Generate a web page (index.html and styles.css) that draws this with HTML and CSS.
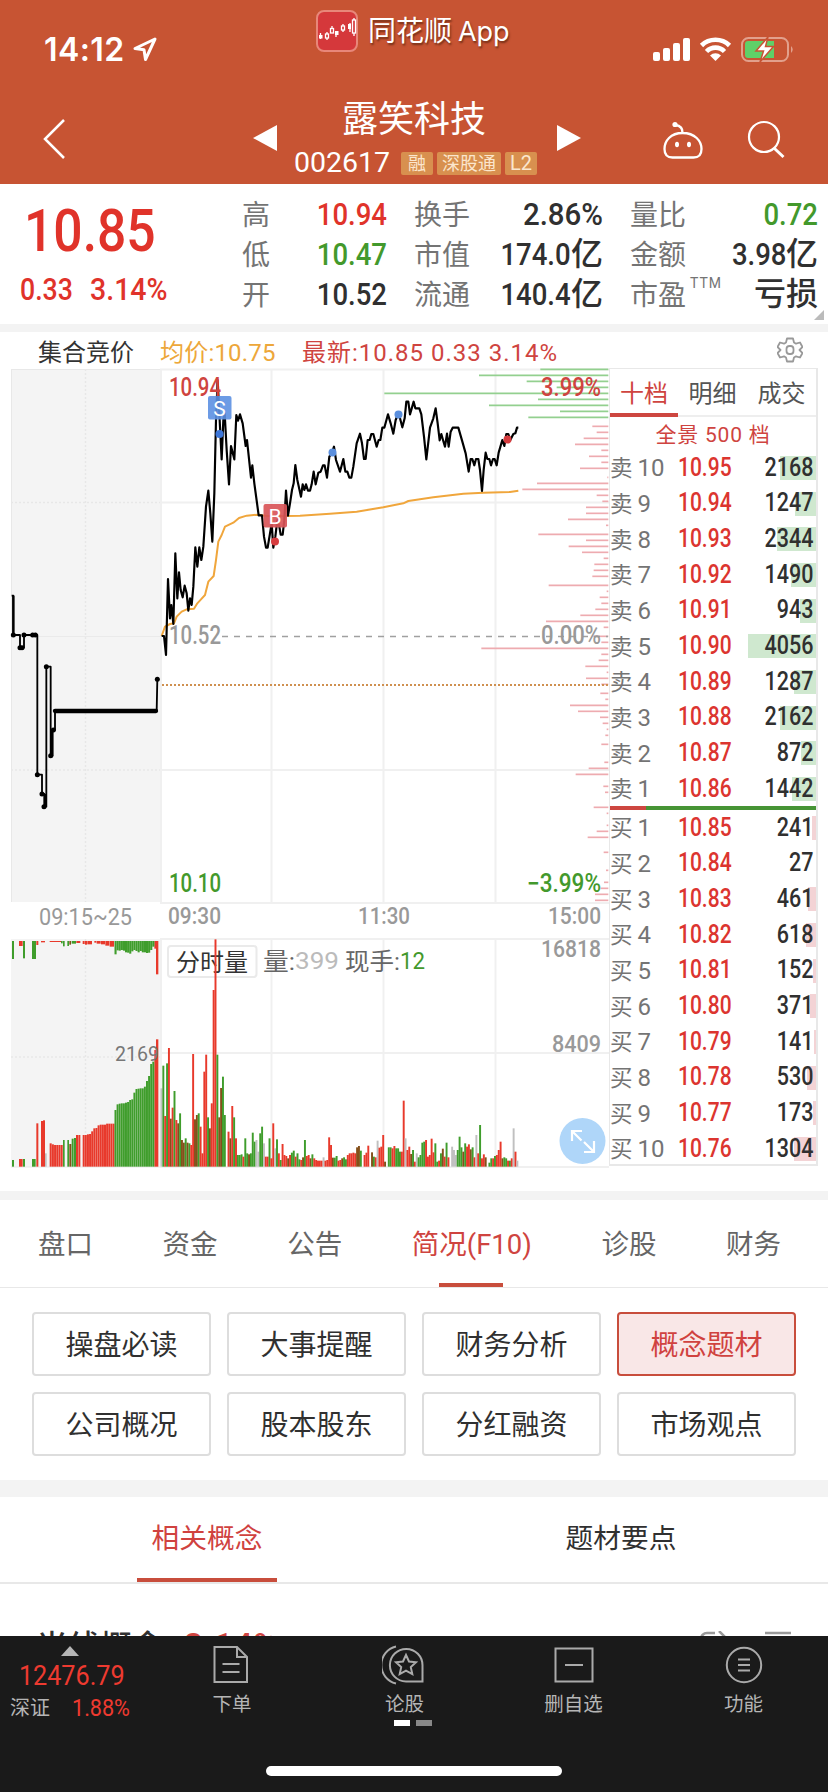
FILE: index.html
```html
<!DOCTYPE html>
<html lang="zh-CN">
<head>
<meta charset="utf-8">
<title>露笑科技 002617</title>
<link rel="stylesheet" href="styles.css">
</head>
<body>
<div class="page">
  <header class="header">
    <div class="status">
      <div class="clock"><span>14:12</span>
        <svg width="24" height="25" viewBox="0 0 24 25"><path d="M22 2L2 11.5l9 1.2L12.500 22.500z" fill="none" stroke="#fff" stroke-width="3" stroke-linejoin="round"/></svg>
      </div>
      <div class="app">
        <svg width="42" height="42" viewBox="0 0 42 42"><rect x="1" y="1" width="40" height="40" rx="7" fill="#d5383b" stroke="#e8877a" stroke-width="2"/><g fill="none" stroke="#fff" stroke-width="1.300"><path d="M4.500 29v-6M11 30v-8M16 18v-2M20 27v-4M27 22v-8M34 22V13M38 26V8"/><rect x="9.500" y="24" width="3" height="4" fill="#d5383b"/><rect x="14.500" y="18.500" width="3" height="4.500"/><rect x="25.500" y="16" width="3" height="4" fill="#d5383b"/><rect x="36.500" y="10" width="3" height="13" fill="#d5383b"/></g><g fill="#fff"><rect x="3" y="25" width="3.500" height="3.500"/><rect x="19" y="21" width="3.500" height="4"/><rect x="32" y="14" width="3" height="5"/></g></svg>
        <span>同花顺 <i>App</i></span>
      </div>
      <svg class="signals" width="142" height="30" viewBox="0 0 142 30">
        <g fill="#fff"><rect x="0" y="18" width="7" height="9" rx="2"/><rect x="10" y="14" width="7" height="13" rx="2"/><rect x="20" y="9" width="7" height="18" rx="2"/><rect x="30" y="4" width="7" height="23" rx="2"/></g>
        <g fill="none" stroke="#fff" stroke-width="4.600"><path d="M48.500 11.500a20 20 0 0 1 28 0"/><path d="M53.500 17.500a12.500 12.500 0 0 1 18 0"/></g><path d="M57 21.500a8 8 0 0 1 11 0l-5.500 5.500z" fill="#fff"/>
        <rect x="89" y="4" width="46" height="23" rx="6.500" fill="none" stroke="#e2a08c" stroke-width="2"/><path d="M95 7h26v17H95a3 3 0 0 1-3-3V10a3 3 0 0 1 3-3z" fill="#5fd068"/><path d="M138 12q3.500 3.500 0 7z" fill="#e2a08c"/>
        <path d="M115 3L103 17h7.500L107 28l13.500-15.500h-8z" fill="#fff" stroke="#c75433" stroke-width="1.500"/>
      </svg>
    </div>
    <div class="titlebar">
      <svg class="back" width="24" height="40" viewBox="0 0 24 40"><path d="M21 1L2 20l19 19" fill="none" stroke="#fff" stroke-width="2.500"/></svg>
      <svg class="prev" width="24" height="26" viewBox="0 0 24 26"><path d="M24 0v26L0 13z" fill="#fff"/></svg>
      <div class="title">
        <h1>露笑科技</h1>
        <div class="code"><span>002617</span><b>融</b><b>深股通</b><b>L2</b></div>
      </div>
      <svg class="next" width="24" height="26" viewBox="0 0 24 26"><path d="M0 0v26l24-13z" fill="#fff"/></svg>
      <svg class="robot" width="42" height="38" viewBox="0 0 42 38"><path d="M20.500 12C33 12 39.500 20 39.500 28c0 6-3 8.500-8 8.500h-21c-5 0-8-2.500-8-8.500 0-8 6-16 18-16zM20.500 12q.5-7-7-8" fill="none" stroke="#fff" stroke-width="2.300"/><circle cx="13" cy="3.500" r="2.600" fill="#fff"/><ellipse cx="15" cy="23.500" rx="2" ry="2.800" fill="#fff"/><ellipse cx="27" cy="23.500" rx="2" ry="2.800" fill="#fff"/></svg>
      <svg class="search" width="40" height="40" viewBox="0 0 40 40"><circle cx="17" cy="17" r="15" fill="none" stroke="#fff" stroke-width="2.200"/><path d="M27.500 28.500l9 8.500" stroke="#fff" stroke-width="3"/></svg>
    </div>
  </header>

  <section class="quote">
    <div class="last"><div class="big"><span class="num">10.85</span></div><div class="chg"><span class="num">0.33</span><span class="num">3.14%</span></div></div>
    <dl class="c1"><dt>高</dt><dd class="up num">10.94</dd><dt>低</dt><dd class="down num">10.47</dd><dt>开</dt><dd class="num">10.52</dd></dl>
    <dl class="c2"><dt>换手</dt><dd class="num">2.86%</dd><dt>市值</dt><dd><span class="num">174.0</span>亿</dd><dt>流通</dt><dd><span class="num">140.4</span>亿</dd></dl>
    <dl class="c3"><dt>量比</dt><dd class="down num">0.72</dd><dt>金额</dt><dd><span class="num">3.98</span>亿</dd><dt>市盈<sup>TTM</sup></dt><dd>亏损</dd></dl>
    <i class="corner"></i>
  </section>

  <section class="market">
    <div class="legend">
      <span class="l1">集合竞价</span><span class="l2">均价:10.75</span><span class="l3">最新:10.85&nbsp;0.33&nbsp;3.14%</span>
      <svg width="26" height="26" viewBox="0 0 26 26"><path d="M10 1.500h6l1 4 2 1.200 4-1.200 2.500 4.500-3 3 3 3-2.500 4.500-4-1.200-2 1.200-1 4h-6l-1-4-2-1.200-4 1.200L.5 16l3-3-3-3L3 5.500l4 1.200 2-1.200z" fill="none" stroke="#999" stroke-width="1.800" stroke-linejoin="round"/><rect x="9.500" y="9" width="7" height="8" rx="3" fill="none" stroke="#999" stroke-width="1.800"/></svg>
    </div>
    <div class="board">
      <svg class="chart" id="chart" width="600" height="800" viewBox="10 368 600 800"></svg>
      <div class="book">
        <nav><b class="on">十档</b><b>明细</b><b>成交</b></nav>
        <div class="all">全景 500 档</div>
        <div id="asks"></div>
        <div class="ratio"><i></i></div>
        <div id="bids"></div>
      </div>
    </div>
  </section>

  <nav class="tabs"><a>盘口</a><a>资金</a><a>公告</a><a class="on">简况(F10)</a><a>诊股</a><a>财务</a></nav>
  <section class="buttons">
    <a>操盘必读</a><a>大事提醒</a><a>财务分析</a><a class="on">概念题材</a>
    <a>公司概况</a><a>股本股东</a><a>分红融资</a><a>市场观点</a>
  </section>
  <nav class="subtabs"><a class="on"><span>相关概念</span></a><a><span>题材要点</span></a></nav>
  <section class="concept"><b>光线概念</b><em>3.14%</em>
    <svg width="92" height="24" viewBox="0 0 92 24"><path d="M16 2H8a6 6 0 0 0-6 6v8M20 0l6 6-6 6M66 2h26" fill="none" stroke="#999" stroke-width="2.500"/></svg>
  </section>

  <footer class="dock">
    <div class="items">
      <div class="index"><i></i><span class="num">12476.79</span><p>深证<em class="num">1.88%</em></p></div>
      <div class="item i1"><svg width="36" height="40" viewBox="0 0 36 40"><path d="M1.500 2H24l10 10v25H1.500zM24 2v10h10M9.500 19h17M9.500 27h17"/></svg>下单</div>
      <div class="item i2"><svg width="42" height="40" viewBox="0 0 42 40"><path d="M14 1.500A19 19 0 0 0 14 38.500M40.500 36.500H24a16.300 16.300 0 1 1 16.500-16.200zM24 10l3 6.500 7 .8-5.200 4.800 1.500 7-6.300-3.500-6.300 3.500 1.500-7-5.200-4.800 7-.8z"/></svg>论股<u><s></s><s></s></u></div>
      <div class="item i3"><svg width="40" height="40" viewBox="0 0 40 40"><rect x="1.500" y="3.500" width="37" height="33"/><path d="M11 20h18"/></svg>删自选</div>
      <div class="item i4"><svg width="38" height="40" viewBox="0 0 38 40"><circle cx="19" cy="20" r="17.200"/><path d="M13 14.500h12M13 20h12M13 25.500h12"/></svg>功能</div>
    </div>
    <div class="home"></div>
  </footer>
</div>
<script src="chart.js"></script>
</body>
</html>
```

FILE: styles.css
```css
* { box-sizing: border-box; }
body { margin: 0; background: #fff; color: #303030; font-family: Roboto, "Noto Sans CJK SC", sans-serif; }
i, em, u, s { font-style: normal; text-decoration: none; }
svg { display: block; flex: none; }
.page { width: 828px; height: 1792px; display: flex; flex-direction: column; overflow: hidden; }
.page > * { flex: none; }
.num { display: inline-block; font-weight: 500; transform: scaleX(.86); transform-origin: right; }
.up { color: #e0332a; }
.down { color: #43992c; }

.header { height: 184px; background: #c75433; color: #fff; }
.status { height: 96px; display: flex; }
.clock { width: 316px; padding: 37px 0 0 44px; display: flex; gap: 8px; font: 600 32px/25px Inter, sans-serif; letter-spacing: .4px; }
.clock span { width: 81px; white-space: nowrap; }
.app { width: 337px; padding-top: 10px; display: flex; gap: 10px; font-size: 28px; line-height: 44px; text-shadow: 1px 2px 2px rgba(80,30,10,.7); }
.app i { font-family: Inter, sans-serif; font-size: 27px; margin-left: -1px; }
.signals { margin-top: 34px; }
.titlebar { height: 88px; display: flex; }
.back { margin: 23px 0 0 43px; }
.prev { margin: 29px 0 0 186px; }
.title { width: 280px; }
.next { margin-top: 29px; }
.robot { margin: 25px 0 0 81px; }
.search { margin: 24px 0 0 43px; }
.title h1 { margin: 2px 0 0; font-size: 36px; font-weight: 400; line-height: 44px; text-align: center; padding-right: 6px; }
.code { display: flex; align-items: center; margin-top: 3px; padding-left: 17px; font-size: 28.500px; line-height: 36px; }
.code span { width: 107px; }
.code b { height: 23px; margin-right: 4px; padding: 0 7px; border-radius: 2px; background: #d8904f; color: #fbe6cd; font-size: 18px; font-weight: 400; line-height: 23px; }
.code b:nth-of-type(2) { padding: 0 5px; }
.code b:last-child { font-size: 20px; padding: 0 5px; }

.quote { position: relative; height: 148px; border-bottom: 8px solid #f3f3f3; display: flex; }
.last { width: 242px; color: #e0332a; }
.big { height: 80px; padding: 14px 0 0 24px; font-size: 60px; line-height: 66px; }
.last .num { transform-origin: left; transform: scaleX(.86); }
.chg { display: flex; padding: 9px 0 0 20px; font-size: 31px; line-height: 34px; }
.chg span { width: 70px; }
.chg .num:last-child { transform: scaleX(.92); }
.quote dl { margin: 10px 0 0; display: grid; grid-template-columns: auto 1fr; grid-auto-rows: 40px; line-height: 40px; }
.c1 { width: 145px; }
.c2 { width: 189px; margin-left: 27px !important; }
.c3 { width: 188px; margin-left: 27px !important; }
.quote dt { font-size: 28px; line-height: 43px; color: #747474; white-space: nowrap; }
.quote dd { margin: 0; font-size: 32px; font-weight: 500; text-align: right; white-space: nowrap; }
.quote dd .num { margin-left: -20px; }
.c2 dd:first-of-type { transform: scaleX(.92); }
.c3 dt:nth-of-type(3) { width: 60px; }
.quote sup { font-size: 14px; line-height: 10px; vertical-align: 17px; letter-spacing: 1px; margin-left: 4px; }
.corner { position: absolute; right: 4px; bottom: 4px; border: 5px solid transparent; border-right-color: #bbb; border-bottom-color: #bbb; }

.market { height: 868px; border-bottom: 9px solid #f3f3f3; }
.legend { height: 36px; display: flex; align-items: center; line-height: 36px; font-size: 24px; padding: 5px 0 0 38px; }
.l1 { width: 122px; color: #333; }
.l2 { width: 142px; color: #eda73a; letter-spacing: .2px; }
.l3 { width: 475px; color: #cf4440; letter-spacing: 1px; }
.legend svg { margin-top: -6px; }
.board { display: flex; padding-left: 10px; }
.chart text { font-family: Roboto, "Noto Sans CJK SC", sans-serif; }
.book { width: 209px; height: 798px; margin-left: -1px; border: 1px solid #e8e8e8; border-width: 1px 2px 2px 1px; }
.book nav { height: 48px; display: flex; border-bottom: 2px solid #eee; }
.book nav b { flex: 1; text-align: center; font-size: 24px; font-weight: 400; line-height: 50px; color: #555; }
.book nav .on { flex: 0 0 68px; height: 48px; color: #cf4440; border-bottom: 4px solid #cd4640; }
.all { height: 34px; line-height: 36px; font-size: 21px; text-align: center; color: #cf4440; letter-spacing: .8px; }
.row { position: relative; height: 35.670px; display: flex; align-items: center; line-height: 35px; }
.row label { width: 68px; font-size: 24px; color: #747474; white-space: nowrap; }
.row label i { font-size: 22.500px; margin-right: 5px; }
.row .num { position: relative; margin-top: -3px; font-size: 25px; }
.row .price { width: 60px; color: #dc352f; transform-origin: left; transform: scaleX(.84); }
.row .qty { flex: 1; text-align: right; padding-right: 3px; }
.row .bar { position: absolute; right: 0; top: 5px; height: 24px; background: #cfe8cf; }
#bids .bar { background: #f3d3d5; }
.ratio { height: 4px; margin-bottom: 1px; background: #469435; }
#asks { height: 355px; }
.ratio i { display: block; width: 36px; height: 4px; background: #cd4640; }

.tabs { height: 88px; display: flex; justify-content: space-between; padding: 0 47px 0 38px; border-bottom: 1px solid #e8e8e8; font-size: 27.500px; line-height: 89px; color: #666; }
.tabs .on { position: relative; color: #cf4440; }
.tabs .on::after { content: ""; position: absolute; left: 27px; bottom: 0; width: 64px; height: 4px; background: #c84d3c; }
.buttons { height: 209px; padding: 24px 32px; border-bottom: 17px solid #f3f3f3; display: grid; grid-template-columns: repeat(4, 1fr); grid-auto-rows: 64px; gap: 16px; }
.buttons a { border: 2px solid #ddd; border-radius: 4px; text-align: center; font-size: 28px; line-height: 63px; }
.buttons .on { border-color: #c84d3c; background: #f9e7e7; color: #d0423f; }
.subtabs { height: 87px; display: flex; border-bottom: 2px solid #e8e8e8; }
.subtabs a { flex: 1; display: flex; justify-content: center; font-size: 27.700px; line-height: 83px; }
.subtabs span { width: 140px; text-align: center; height: 85px; }
.subtabs .on span { color: #d0423f; border-bottom: 4px solid #c84d3c; }
.concept { height: 52px; overflow: hidden; display: flex; padding: 37px 35px 0 36px; font-size: 32px; line-height: 46px; }
.concept b { width: 148px; font-weight: 500; margin-top: 3px; }
.concept em { width: 515px; color: #cf4440; font-weight: 500; font-size: 34px; white-space: nowrap; margin-top: 1px; letter-spacing: .5px; }
.concept svg { margin-top: 10px; }

.dock { height: 156px; background: #1a1a1a; color: #b5b5b5; }
.items { height: 130px; display: flex; }
.index { width: 143px; text-align: center; font-size: 28px; line-height: 33px; color: #ee3a30; }
.index > i { display: block; width: 18px; margin: 10px auto 3px 61px; border: 9px solid transparent; border-top: 0; border-bottom: 10px solid #b5b5b5; }
.index .num { transform-origin: center; transform: scaleX(.9); font-weight: 400; }
.index p { margin: 0; display: flex; padding-left: 10px; font-size: 20px; line-height: 32px; color: #b5b5b5; }
.index p .num { margin-left: 22px; color: #ee3a30; font-size: 24px; transform-origin: left; }
.item { position: relative; display: flex; flex-direction: column; align-items: center; width: 180px; padding-top: 9px; font-size: 19.500px; line-height: 40px; }
.item svg { fill: none; stroke: #aaa; stroke-width: 2; }
.i1 svg { margin-left: -3px; }
.i2 svg { margin-left: -3px; }
.i1 { width: 178px; }
.i2 { width: 167px; }
.i3 { width: 171px; }
.i4 { width: 169px; }
.item u { position: absolute; top: 84px; left: 73px; display: flex; gap: 6px; }
.item s { width: 16px; height: 6px; background: #fff; }
.item s + s { background: #888; }
.home { width: 296px; height: 10px; margin: 0 auto; border-radius: 5px; background: #fff; }
```

FILE: chart.js
```js
const R = '#e8392b', G = '#3f9d2c', B = '#84501a', Y = '#c0c0c0';
const colors = { r: R, g: G, b: B, y: Y };
const rect = (x, y, w, h, f) => `<rect x="${x}" y="${y}" width="${w}" height="${h}" fill="${f}"/>`;
const line = (x1, y1, x2, y2, c, extra = '') => `<path d="M${x1} ${y1}L${x2} ${y2}" stroke="${c}" ${extra}/>`;
const text = (x, y, w, size, color, weight, s) =>
  `<text x="${x}" y="${y}" font-size="${size}" fill="${color}" font-weight="${weight}" textLength="${w}" lengthAdjust="spacingAndGlyphs">${s}</text>`;
let out = '';

// backgrounds and grid
out += rect(11, 369, 149.500, 533, '#f4f4f4') + rect(11, 939, 149.500, 228, '#f4f4f4');
const grid = '#f0f0f0', wide = 'stroke-width="2"', dots = 'stroke-width="1.500" stroke-dasharray="2 2"';
for (const y of [369.500, 502.500, 770, 903, 939, 1053, 1167]) out += line(160, y, 609, y, grid, wide);
for (const x of [161, 271.500, 383.500, 495.500]) out += line(x, 369, x, 903, grid, wide) + line(x, 939, x, 1167, grid, wide);
for (const y of [502.500, 770, 1057]) out += line(11, y, 160, y, '#e7e7e7', dots);
out += line(85.500, 369, 85.500, 902, '#e7e7e7', dots) + line(85.500, 939, 85.500, 1167, '#e7e7e7', dots);
out += line(11, 369.500, 160, 369.500, '#e8e8e8') + line(11.500, 369, 11.500, 902, '#e8e8e8') + line(11, 636.500, 160, 636.500, '#eaeaea') + line(11, 1167, 160, 1167, '#e8e8e8');

// price distribution, one line per price: start x, y
const greens = '721,28 537,46 680,64 770,82 253,100 714,118 567,136 780,154 685,172';
const reds = '877,199 890,217 851,235 825,253 904,271 867,289 904,307 840,325 922,352 711,370 667,388 890,406 907,424 858,442 858,460 804,478 918,496 715,523 858,541 806,559 846,577 911,595 883,613 881,631 877,649 746,676 920,694 899,712 904,730 886,748 841,766 738,784 911,802 880,829 904,847 544,865 904,883 896,901 856,919 920,937 858,955 904,973 901,1000 916,1018 810,1036 834,1054 900,1072 908,1090 920,1108 916,1126 904,1153 913,1207 866,1225 827,1243 910,1279 915,1297 881,1342 920,1360 920,1396 890,1414 863,1432 911,1477 918,1531 912,1567 902,1585 885,1603 885,1621';
const dist = (s, c) => s.split(' ').map(p => { const [x, y] = p.split(',').map(Number); return line(x + 900, y, 1825, y, c, 'stroke-width="5"'); }).join('');
out += `<g transform="translate(0 360) scale(.33333)">${dist(greens, '#93d08f')}${dist(reds, '#eeabb0')}</g>`;

out += line(222, 636.500, 608, 636.500, '#a0a0a0', 'stroke-width="1.300" stroke-dasharray="6 6"');
out += line(162, 685, 608, 685, '#cf9050', 'stroke-width="2" stroke-dasharray="2 2"');

// average and price curves
const avg = '485,828 495,800 510,792 522,790 530,770 545,755 560,748 582,746 592,730 603,718 615,705 625,665 641,648 648,600 655,545 665,525 675,500 700,488 717,474 740,467 775,464 800,468 860,468 900,467 990,461 1070,455 1150,442 1210,430 1225,423 1300,412 1390,401 1450,398 1530,396 1555,392';
const price = '485,828 492,828 498,885 504,657 510,775 514,735 520,792 526,580 532,715 537,637 542,690 548,712 554,677 560,700 565,752 570,715 575,735 580,680 586,562 592,620 598,562 604,600 610,560 618,440 625,392 631,460 637,545 643,400 648,180 653,60 660,200 665,298 670,180 674,160 680,270 687,373 693,258 703,298 709,165 714,182 720,163 728,190 737,258 741,240 753,353 757,316 763,370 776,466 786,466 792,530 798,563 803,563 810,520 815,490 820,563 826,530 832,480 838,500 842,524 848,524 853,480 858,392 864,467 870,430 876,390 881,370 886,315 892,360 903,410 908,373 913,390 918,373 924,392 930,392 935,373 941,335 947,373 955,338 962,335 969,316 974,316 981,353 988,290 995,280 1002,260 1008,300 1020,335 1030,297 1036,335 1042,335 1048,353 1054,353 1060,320 1070,250 1080,221 1086,250 1092,297 1097,297 1103,240 1109,240 1114,222 1120,222 1130,260 1136,240 1141,240 1147,203 1153,203 1164,163 1172,190 1180,221 1187,180 1195,160 1200,175 1207,202 1214,175 1219,125 1225,125 1230,163 1241,125 1246,145 1258,145 1264,163 1272,230 1279,298 1290,203 1300,175 1307,145 1313,190 1319,241 1324,222 1329,240 1335,260 1341,221 1346,260 1352,215 1358,203 1375,203 1386,241 1397,280 1406,335 1412,297 1417,297 1423,316 1428,297 1435,297 1440,330 1446,393 1451,330 1457,278 1462,297 1468,297 1473,316 1479,297 1484,297 1490,316 1496,278 1507,240 1513,258 1519,222 1525,222 1531,240 1540,222 1546,220 1551,203 1555,203';
const auction = '35,707 40,707 40,825 60,825 60,863 72,863 72,825 112,825 112,1244 126,1244 126,1302 133,1302 133,1340 139,1340 139,920 152,920 152,1187 158,1187 158,1110 165,1110 165,1053 470,1053 472,958';
const poly = (p, c, w) => `<polyline points="${p}" fill="none" stroke="${c}" stroke-width="${w}" stroke-linejoin="round"/>`;
const nodes = [[40, 825], [60, 863], [66, 863], [72, 825], [98, 825], [106, 825], [112, 1244], [126, 1302], [132, 1340], [139, 920], [152, 1187], [160, 1110], [472, 958]];
out += `<g transform="translate(0 360) scale(.33333)">${poly(avg, '#f0a63c', 6)}${poly(price, '#000', 6.500)}${poly(auction, '#000', 5.500)}`
  + line(40, 707, 40, 825, '#000', 'stroke-width="7"') + line(154, 1110, 154, 1187, '#000', 'stroke-width="8"') + line(136, 1302, 136, 1340, '#000', 'stroke-width="9"')
  + line(165, 1053, 468, 1053, '#000', 'stroke-width="13" stroke-linecap="round"')
  + nodes.map(n => `<circle cx="${n[0]}" cy="${n[1]}" r="7.500"/>`).join('') + '</g>';

// trade markers
const dot = (x, y, c) => `<circle cx="${x}" cy="${y}" r="4" fill="${c}"/>`;
out += dot(219.500, 434, '#3d76d8') + dot(275, 541.500, '#d63c3f') + dot(332.500, 452.500, '#5b8fdd') + dot(398.500, 414.500, '#5b8fdd') + dot(507.500, 439.500, '#d63c3f');
out += text(169, 396, 52, 25, '#cf4440', 500, '10.94') + text(541, 396, 60, 25, '#cf4440', 500, '3.99%');
out += `<g font-size="21" fill="#fff" text-anchor="middle"><rect x="208" y="396" width="23.500" height="23.500" rx="2" fill="#5c90e2" opacity=".9"/><text x="219.500" y="415.500">S</text><rect x="263.500" y="504" width="23.500" height="23.500" rx="2" fill="#d95558" opacity=".92"/><text x="275" y="523.500">B</text></g>`;
out += text(169, 644, 52, 25, '#999', 500, '10.52') + text(541, 644, 60, 25, '#999', 500, '0.00%');
out += text(169, 892, 52, 25, '#43992c', 500, '10.10') + text(527, 892, 74, 25, '#43992c', 500, '−3.99%');
out += text(39, 925, 93, 24, '#999', 400, '09:15~25') + text(168, 924, 53, 24, '#999', 500, '09:30') + text(358, 924, 52, 24, '#999', 500, '11:30') + text(548, 924, 53, 24, '#999', 500, '15:00');
out += text(541, 957, 60, 24, '#999', 500, '16818') + text(552, 1052, 49, 24, '#999', 500, '8409');

// volume panel
out += '<rect x="168" y="946" width="88.500" height="31" rx="3" fill="#fff" stroke="#eaeaea" stroke-width="2"/>';
out += text(176, 971, 72, 24, '#333', 400, '分时量') + text(263, 970, 32, 24, '#666', 400, '量:') + text(295, 969, 44, 24, '#bbb', 400, '399') + text(345, 970, 55, 24, '#666', 400, '现手:') + text(400, 969, 25, 24, '#43992c', 400, '12');

let bars = '';
const pre = [[36, 720, 'g', 6], [57, 717, 'r', 11], [69, 717, 'g', 6], [96, 717, 'g', 11], [109, 610, 'r', 6], [123, 603, 'r', 6], [129, 601, 'r', 6], [135, 700, 'y', 5], [189, 660, 'g', 5], [202, 660, 'g', 5], [208, 672, 'b', 6], [215, 656, 'g', 6], [222, 654, 'g', 6], [228, 645, 'r', 6], [235, 645, 'r', 6], [463, 390, 'r', 5], [468, 358, 'r', 7]];
for (const [x, y, c, w] of pre) bars += rect(x, y, w, 740 - y, colors[c]);
[670, 673, 675, 675, 675, 675].forEach((y, i) => bars += rect(149 + i * 6.600, y, 6.100, 740 - y, R));
[645, 645, 643, 642, 634, 625, 624, 616, 614, 614, 614, 611, 611, 611, 611].forEach((y, i) => bars += rect(248 + i * 6.400, y, 6, 740 - y, R));
[570, 553, 551, 550, 550, 548, 546, 540, 538, 518, 507, 506, 505, 505, 500, 483, 468, 432, 425].forEach((y, i) => bars += rect(343.500 + i * 6.300, y, 5.900, 740 - y, G));
const hanging = [[36, 117, 'g', 6], [57, 78, 'r', 11], [69, 115, 'g', 6], [96, 117, 'g', 12], [109, 75, 'r', 6], [123, 67, 'r', 12], [149, 66, 'r', 34], [183, 70, 'g', 5], [189, 79, 'g', 5], [202, 78, 'g', 5], [208, 74, 'b', 5], [215, 71, 'g', 13], [229, 69, 'r', 12], [248, 72, 'r', 6], [255, 74, 'r', 6], [262, 73, 'r', 14], [283, 68, 'r', 6], [290, 71, 'r', 12], [303, 73, 'r', 12], [316, 77, 'r', 12], [329, 80, 'r', 13], [463, 86, 'r', 5], [468, 163, 'r', 7]];
for (const [x, y, c, w] of hanging) bars += rect(x, 63, w, y - 63, colors[c]);
[103, 91, 92, 90, 92, 97, 98, 101, 94, 90, 93, 97, 93, 97, 97, 99, 98, 90, 80].forEach((y, i) => bars += rect(343.500 + i * 6.300, 63, 6.300, y - 63, G));

// one bar per minute: top edge and colour
const vol = '505y 437g 588r 430g 384r 596b 563r 513g 600r 610b 580g 660b 668b 655g 668b 670g 675r 402r 598b 585b 580g 620r 700r 455r 404r 592g 625b 550r 210r 58r 404g 592b 504b 470g 585g 740g 635r 655b 558r 592g 655r 705g 705g 703g 710r 655g 700g 703b 700g 638g 665g 660y 695y 640g 620g 670y 710r 710r 655g 715r 610r 685y 658g 700r 720g 672r 705r 708r 715b 705r 698g 692g 710r 700g 718g 720r 712b 660g 708r 705r 715b 703g 715r 720r 722r 722r 722r 712y 722r 720r 652r 675r 713b 713g 708g 722r 720r 715b 712g 718g 705r 700r 700r 698r 700r 682b 678b 692g 740g 705r 698r 677r 740r 697b 710g 712r 662y 683r 680r 645r 725b 740r 682g 682g 685r 678r 685g 685g 695g 695r 542r 655y 690r 680r 702b 690g 725r 700y 712g 705g 668g 665g 660r 710r 705r 656r 697r 670g 725g 722r 700g 686b 710r 668g 712r 740r 680y 690y 705y 690g 650g 682g 695b 670g 680r 673r 688b 682g 712r 645y 700r 615g 715r 703r 712b 740g 728g 715g 715r 708g 705r 690r 665r 715b 712g 715g 722r 722g 715r 625y 695r 722y';
vol.split(' ').forEach((v, i) => { const y = parseInt(v, 10); bars += rect((481.500 + i * 5.590).toFixed(1), y, 5.800, 740 - y, colors[v.slice(-1)]); });
out += `<g transform="translate(0 920) scale(.33333)">${bars}</g>`;
out += text(115, 1061, 44, 21, '#777', 400, '2169');
out += '<circle cx="582.500" cy="1141" r="23" fill="#afd6f9"/><path d="M572 1141v-10h10M572.500 1131.500l9 9M594 1141v11h-10M593.500 1151.500l-9.500-9.500" fill="none" stroke="#fff" stroke-width="2.200"/>';
document.getElementById('chart').innerHTML = out;

// order book
const row = (side, level, p, qty) =>
  `<div class="row"><div class="bar" style="width:${Math.round(qty * .0168)}px"></div><label><i>${side}</i>${level}</label><span class="num price">${p.toFixed(2)}</span><span class="num qty">${qty}</span></div>`;
document.getElementById('asks').innerHTML = [2168, 1247, 2344, 1490, 943, 4056, 1287, 2162, 872, 1442].map((q, i) => row('卖', 10 - i, 10.95 - i / 100, q)).join('');
document.getElementById('bids').innerHTML = [241, 27, 461, 618, 152, 371, 141, 530, 173, 1304].map((q, i) => row('买', i + 1, 10.85 - i / 100, q)).join('');
```
